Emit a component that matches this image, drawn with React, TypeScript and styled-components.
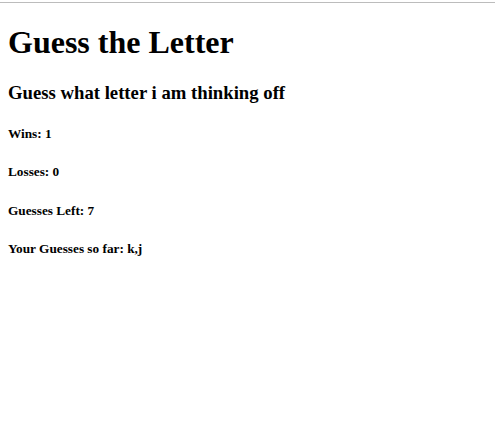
import React from 'react';
import styled, { createGlobalStyle } from 'styled-components';

const GlobalStyle = createGlobalStyle`
  html, body {
    margin: 0;
    padding: 0;
    background: #ffffff;
  }
  body {
    font-family: "Liberation Serif", "Times New Roman", serif;
    color: #000000;
  }
`;

const TopRule = styled.div`
  height: 1px;
  margin-top: 2px;
  width: 495px;
  background: #bcbcbc;
`;

const Page = styled.div`
  padding: 0 8px;
`;

const Title = styled.h1`
  font-size: 32px;
  font-weight: bold;
  margin: 21px 0;
`;

const Subtitle = styled.h3`
  font-size: 18.72px;
  font-weight: bold;
  margin: 18.7px 0;
`;

const Stat = styled.h5`
  font-size: 13.28px;
  font-weight: bold;
  margin: 22.2px 0;
`;

interface GameState {
  wins: number;
  losses: number;
  guessesLeft: number;
  guesses: string[];
}

const state: GameState = {
  wins: 1,
  losses: 0,
  guessesLeft: 7,
  guesses: ['k', 'j'],
};

const App: React.FC = () => {
  return (
    <>
      <GlobalStyle />
      <TopRule />
      <Page>
        <Title>Guess the Letter</Title>
        <Subtitle>Guess what letter i am thinking off</Subtitle>
        <Stat>Wins: {state.wins}</Stat>
        <Stat>Losses: {state.losses}</Stat>
        <Stat>Guesses Left: {state.guessesLeft}</Stat>
        <Stat>Your Guesses so far: {state.guesses.join(',')}</Stat>
      </Page>
    </>
  );
};

export default App;
